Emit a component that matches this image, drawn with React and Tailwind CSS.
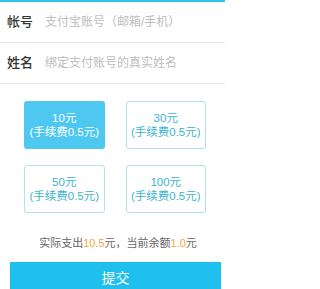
import { useState } from 'react';

const AMOUNTS = [10, 30, 50, 100];

export default function App() {
  const [amount, setAmount] = useState(10);

  return (
    <div className="w-[225px] h-[289px] overflow-hidden bg-white border-t-2 border-[#2cc3e6]" style={{ fontFamily: '"Liberation Sans", "Noto Sans CJK SC", sans-serif' }}>
      {/* form rows */}
      <div className="flex items-center h-[41px] border-b border-[#e8e8e8] pl-[7px]">
        <span className="w-[38px] shrink-0 text-[13px] font-medium text-[#333]">帐号</span>
        <span className="text-[12px] text-[#bdbdbd]">支付宝账号（邮箱/手机）</span>
      </div>
      <div className="flex items-center h-[41px] border-b border-[#e8e8e8] pl-[7px]">
        <span className="w-[38px] shrink-0 text-[13px] font-medium text-[#333]">姓名</span>
        <span className="text-[12px] text-[#bdbdbd]">绑定支付账号的真实姓名</span>
      </div>

      {/* amount choices */}
      <div className="grid grid-cols-2 gap-x-[21px] gap-y-[16px] pl-[24px] pr-[19px] pt-[17px]">
        {AMOUNTS.map(a => (
          <button key={a} onClick={() => setAmount(a)}
            className={amount === a
              ? 'h-[48px] rounded-[3px] bg-[#4ec8f0] text-white flex flex-col items-center justify-center text-[11.5px] leading-[14px]'
              : 'h-[48px] rounded-[3px] bg-white border border-[#b3e0ea] text-[#3cb3cf] flex flex-col items-center justify-center text-[11.5px] leading-[14px]'}>
            <span>{a}元</span>
            <span>(手续费0.5元)</span>
          </button>
        ))}
      </div>

      <p className="mt-[22px] pl-[11px] text-center text-[11px] text-[#666]">
        实际支出<span className="text-[#f2a93b]">{amount + 0.5}</span>元，当前余额<span className="text-[#f2a93b]">1.0</span>元
      </p>

      <button className="mt-[10px] ml-[10px] w-[211px] h-[34px] bg-[#1fc0ee] text-white text-[14px] flex items-center justify-center">
        提交
      </button>
    </div>
  );
}
